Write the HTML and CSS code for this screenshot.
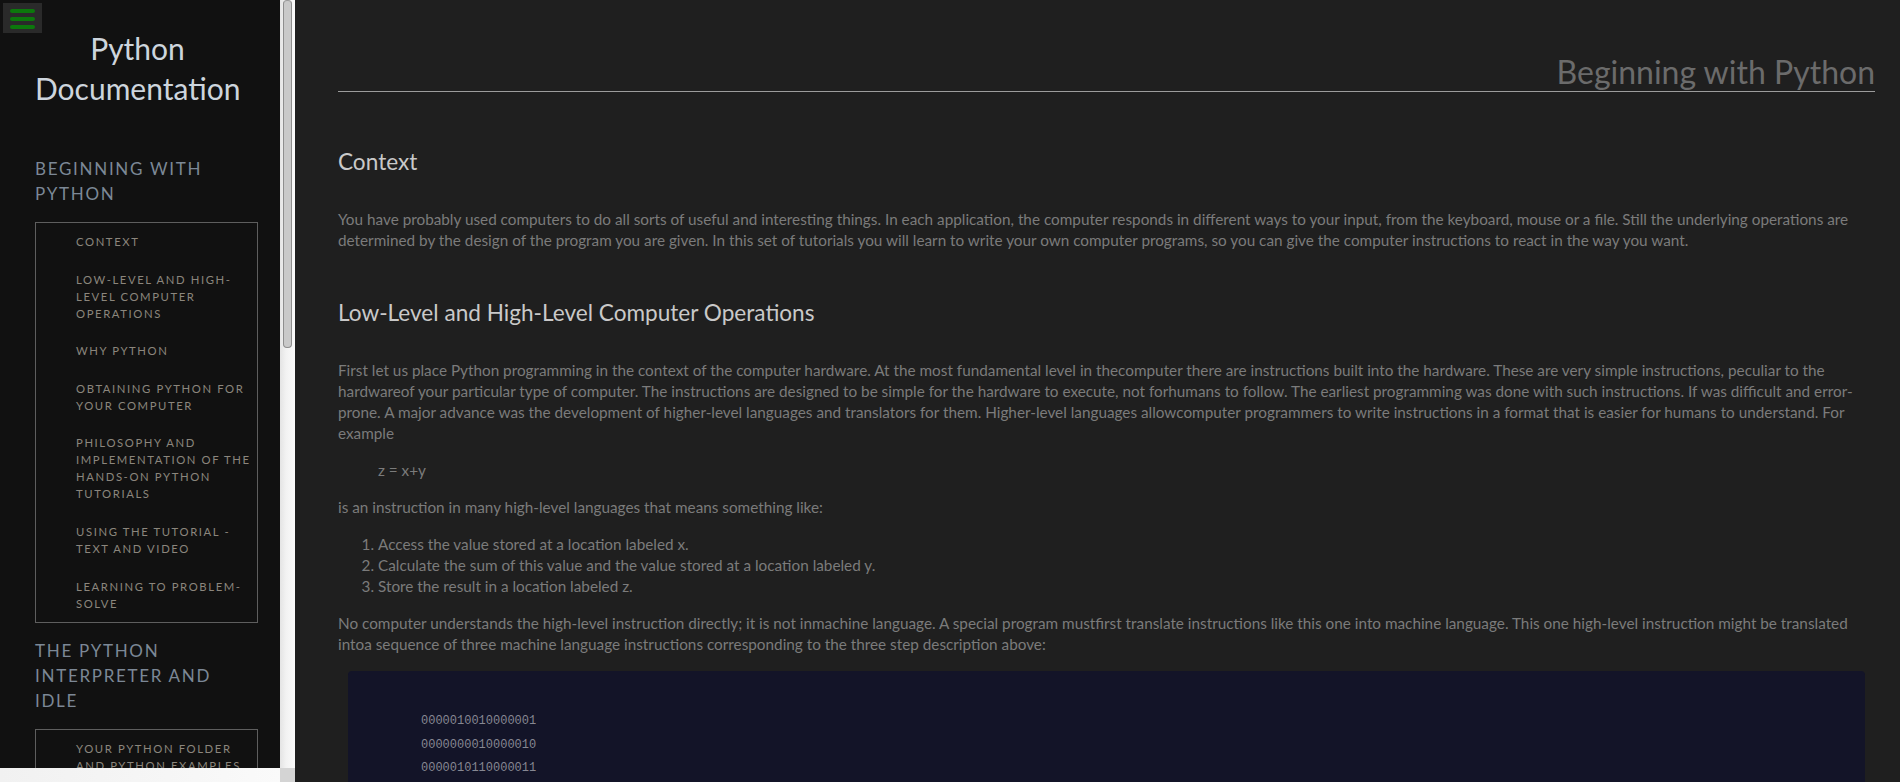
FILE: index.html
```html
<!DOCTYPE html>
<html lang="en">
<head>
<meta charset="utf-8">
<title>Beginning with Python - Python Documentation</title>
<link rel="stylesheet" href="styles.css">
</head>
<body>
<div class="app">
  <aside class="sidebar">
    <button class="menu-toggle" aria-label="Toggle menu">
      <span class="bar"></span><span class="bar"></span><span class="bar"></span>
    </button>
    <nav class="nav">
      <h1 class="brand">Python Documentation</h1>
      <div class="nav-section">
        <h2 class="nav-heading">Beginning with Python</h2>
        <ul class="nav-list">
          <li><a href="#context">Context</a></li>
          <li><a href="#low-level">Low-Level and High-Level Computer Operations</a></li>
          <li><a href="#why">Why Python</a></li>
          <li><a href="#obtaining">Obtaining Python for your Computer</a></li>
          <li><a href="#philosophy">Philosophy and Implementation of the Hands-On Python Tutorials</a></li>
          <li><a href="#using">Using the Tutorial - Text and Video</a></li>
          <li><a href="#learning">Learning to Problem-Solve</a></li>
        </ul>
      </div>
      <div class="nav-section">
        <h2 class="nav-heading">The Python Interpreter and Idle</h2>
        <ul class="nav-list">
          <li><a href="#folder">Your Python Folder and Python Examples</a></li>
          <li><a href="#running">Running A Sample Program</a></li>
          <li><a href="#shell">A Sample Program, Explained</a></li>
        </ul>
      </div>
    </nav>
    <div class="vscroll"><div class="vthumb"></div></div>
    <div class="hscroll"></div>
    <div class="corner"></div>
  </aside>

  <main class="content">
    <header class="page-header">Beginning with Python</header>

    <section id="context">
      <h2>Context</h2>
      <p>You have probably used computers to do all sorts of useful and interesting things. In each application, the computer responds in different ways to your input, from the keyboard, mouse or a file. Still the underlying operations are determined by the design of the program you are given. In this set of tutorials you will learn to write your own computer programs, so you can give the computer instructions to react in the way you want.</p>
    </section>

    <section id="low-level">
      <h2>Low-Level and High-Level Computer Operations</h2>
      <p>First let us place Python programming in the context of the computer hardware. At the most fundamental level in thecomputer there are instructions built into the hardware. These are very simple instructions, peculiar to the hardwareof your particular type of computer. The instructions are designed to be simple for the hardware to execute, not forhumans to follow. The earliest programming was done with such instructions. If was difficult and error-prone. A major advance was the development of higher-level languages and translators for them. Higher-level languages allowcomputer programmers to write instructions in a format that is easier for humans to understand. For example</p>
      <p class="indent">z = x+y</p>
      <p>is an instruction in many high-level languages that means something like:</p>
      <ol>
        <li>Access the value stored at a location labeled x.</li>
        <li>Calculate the sum of this value and the value stored at a location labeled y.</li>
        <li>Store the result in a location labeled z.</li>
      </ol>
      <p>No computer understands the high-level instruction directly; it is not inmachine language. A special program mustfirst translate instructions like this one into machine language. This one high-level instruction might be translated intoa sequence of three machine language instructions corresponding to the three step description above:</p>
      <pre class="code">0000010010000001
0000000010000010
0000010110000011</pre>
    </section>
  </main>
</div>
</body>
</html>
```
FILE: styles.css
```css
* { box-sizing: border-box; }

html, body {
  margin: 0;
  padding: 0;
  height: 100%;
  overflow: hidden;
}

body {
  background: #1f1f1f;
  font-family: Lato, "Open Sans", sans-serif;
}

.app {
  display: flex;
  height: 100vh;
}

/* ---------- Sidebar ---------- */
.sidebar {
  position: relative;
  flex: 0 0 295px;
  display: grid;
  grid-template-columns: 280px 15px;
  grid-template-rows: 1fr 14px;
  height: 100%;
  background: #111111;
}

.menu-toggle {
  position: absolute;
  top: 3px;
  left: 3px;
  width: 39px;
  height: 30px;
  padding: 6px 0 0 7px;
  border: 0;
  background: #2a2a2a;
  display: flex;
  flex-direction: column;
  gap: 4px;
  cursor: pointer;
}

.menu-toggle .bar {
  display: block;
  width: 25px;
  height: 4px;
  border-radius: 2px;
  background: #0c780c;
}

.nav {
  grid-column: 1;
  grid-row: 1;
  overflow: hidden;
  padding: 28px 22px 0 35px;
}

.brand {
  margin: 0 0 48px;
  padding-right: 18px;
  text-align: center;
  font-size: 30px;
  line-height: 40px;
  font-weight: 400;
  color: #cdd5dd;
}

.nav-heading {
  margin: 0 0 16px;
  font-size: 17px;
  line-height: 25px;
  font-weight: 400;
  letter-spacing: 1.7px;
  text-transform: uppercase;
  color: #7c8896;
}

.nav-section + .nav-section {
  margin-top: 15px;
}

.nav-list {
  list-style: none;
  margin: 0;
  padding: 10px 0 10px 40px;
  border: 1px solid #5e5e5e;
}

.nav-list li + li {
  margin-top: 20.6px;
}

.nav-list a {
  display: block;
  font-size: 11.3px;
  line-height: 17px;
  letter-spacing: 1.6px;
  text-transform: uppercase;
  text-decoration: none;
  color: #8b867d;
}

.vscroll {
  grid-column: 2;
  grid-row: 1;
  padding: 0 3px 0 3px;
  background: linear-gradient(to right, #e4e4e4, #f2f2f2 40%, #fbfbfb);
}

.vthumb {
  height: 348px;
  border: 1px solid #8e8e8e;
  border-top-color: #9a9a9a;
  border-radius: 4px;
  background: #c9c9c9;
}

.hscroll {
  grid-column: 1;
  grid-row: 2;
  background: linear-gradient(to right, #f1f1f1, #f6f6f6 60%, #fafafa);
}

.corner {
  grid-column: 2;
  grid-row: 2;
  background: #d4d4d4;
}

/* ---------- Main content ---------- */
.content {
  flex: 1;
  min-width: 0;
  overflow: hidden;
  padding: 53px 25px 0 43px;
  color: #7b7b7b;
  font-size: 15.3px;
  line-height: 21px;
}

.page-header {
  margin-bottom: 56px;
  text-align: right;
  font-size: 32px;
  line-height: 38px;
  color: #6b6b6b;
  border-bottom: 1px solid #9c9c9c;
}

.content h2 {
  margin: 48px 0 33px;
  font-size: 22.6px;
  line-height: 28px;
  font-weight: 400;
  color: #c9c9c9;
}

.content p {
  margin: 16px 0;
}

.content p.indent {
  padding-left: 40px;
}

.content ol {
  margin: 16px 0;
  padding-left: 40px;
}

.code {
  margin: 16px 10px 0;
  padding: 39px 73px 20px;
  background: #131428;
  border-radius: 4px;
  font-family: "Liberation Mono", monospace;
  font-size: 12px;
  line-height: 23.5px;
  color: #868792;
}
```
